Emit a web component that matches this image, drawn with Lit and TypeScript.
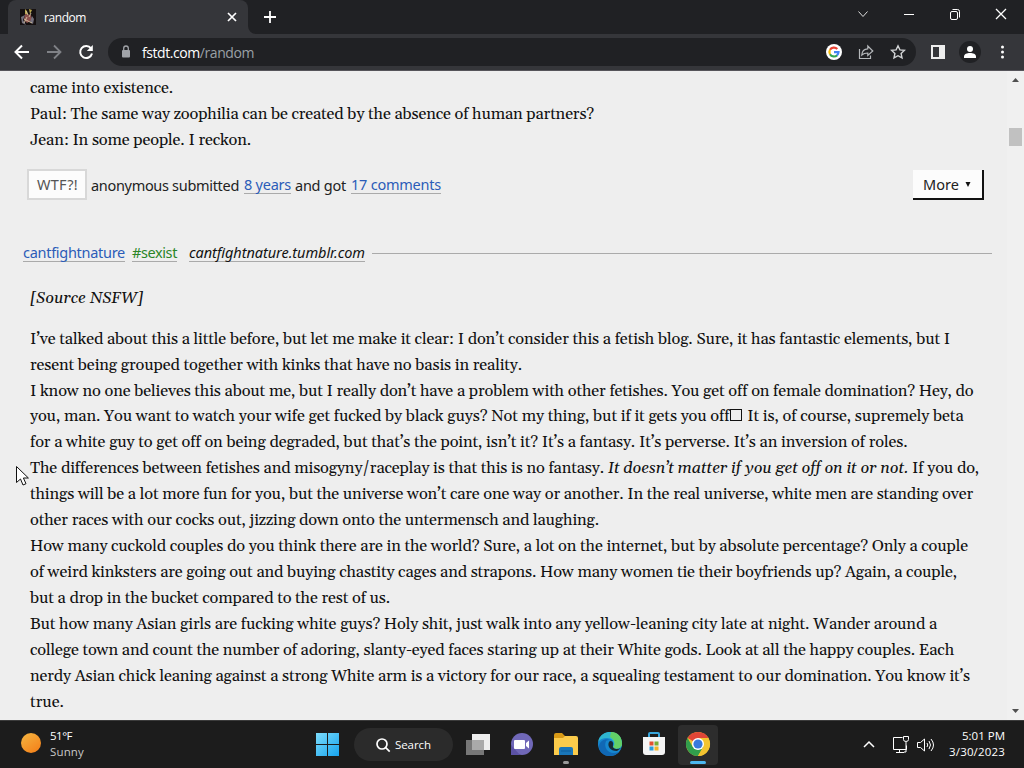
import { LitElement, html, css, svg } from 'lit';
import { customElement, property, query } from 'lit/decorators.js';

interface Line {
  width: number;
  text: unknown;
}

const previousQuote: Line[] = [
  { width: 143, text: 'came into existence.' },
  { width: 564, text: 'Paul: The same way zoophilia can be created by the absence of human partners?' },
  { width: 221, text: 'Jean: In some people. I reckon.' },
];

const quote: Line[] = [
  { width: 920, text: 'I’ve talked about this a little before, but let me make it clear: I don’t consider this a fetish blog. Sure, it has fantastic elements, but I' },
  { width: 492, text: 'resent being grouped together with kinks that have no basis in reality.' },
  { width: 943, text: 'I know no one believes this about me, but I really don’t have a problem with other fetishes. You get off on female domination? Hey, do' },
  { width: 933, text: html`you, man. You want to watch your wife get fucked by black guys? Not my thing, but if it gets you off<i class="tofu"></i> It is, of course, supremely beta` },
  { width: 877, text: 'for a white guy to get off on being degraded, but that’s the point, isn’t it? It’s a fantasy. It’s perverse. It’s an inversion of roles.' },
  { width: 948, text: html`The differences between fetishes and misogyny/raceplay is that this is no fantasy. <em>It doesn’t matter if you get off on it or not.</em> If you do,` },
  { width: 943, text: 'things will be a lot more fun for you, but the universe won’t care one way or another. In the real universe, white men are standing over' },
  { width: 569, text: 'other races with our cocks out, jizzing down onto the untermensch and laughing.' },
  { width: 938, text: 'How many cuckold couples do you think there are in the world? Sure, a lot on the internet, but by absolute percentage? Only a couple' },
  { width: 927, text: 'of weird kinksters are going out and buying chastity cages and strapons. How many women tie their boyfriends up? Again, a couple,' },
  { width: 360, text: 'but a drop in the bucket compared to the rest of us.' },
  { width: 907, text: 'But how many Asian girls are fucking white guys? Holy shit, just walk into any yellow-leaning city late at night. Wander around a' },
  { width: 924, text: 'college town and count the number of adoring, slanty-eyed faces staring up at their White gods. Look at all the happy couples. Each' },
  { width: 940, text: 'nerdy Asian chick leaning against a strong White arm is a victory for our race, a squealing testament to our domination. You know it’s' },
  { width: 34, text: 'true.' },
];

/** A single line of text, tracked so that it runs to the given width. */
@customElement('fit-line')
export class FitLine extends LitElement {
  @property({ type: Number }) width = 0;
  @property({ attribute: false }) text: unknown = '';
  @query('.line') private _line!: HTMLElement;

  static styles = css`
    :host { display: inline-block; vertical-align: top; white-space: nowrap; }
    .line { display: inline-block; font-kerning: normal; }
    .host { color: #fff; }
    .tofu {
      border: 1px solid currentColor;
      box-sizing: border-box;
      display: inline-block;
      height: 12px;
      margin: 0 1px;
      width: 12px;
    }
  `;

  updated() {
    this._line.style.letterSpacing = '0px';
    const natural = this._line.getBoundingClientRect().width;
    const chars = (this._line.textContent ?? '').length;
    if (chars) this._line.style.letterSpacing = `${(this.width - natural) / chars}px`;
  }

  render() {
    return html`<span class="line">${this.text}</span>`;
  }
}

const fit = (width: number, text: unknown) => html`<fit-line .width=${width} .text=${text}></fit-line>`;

@customElement('browser-chrome')
export class BrowserChrome extends LitElement {
  static styles = css`
    :host { display: block; font-family: 'Open Sans', 'Noto Sans', sans-serif; color: #fff; }
    svg { display: block; flex: none; }
    .tabs { background: #202124; display: flex; height: 34px; padding-left: 8px; }
    .tab {
      align-items: center;
      background: #35363a;
      border-radius: 8px 8px 0 0;
      box-sizing: border-box;
      display: flex;
      font-size: 12px;
      height: 34px;
      padding: 0 9px 0 12px;
      width: 240px;
    }
    .tab .title { flex: 1; margin-left: 8px; }
    .curve { align-self: flex-end; }
    .plus { align-self: center; margin-left: 6px; }
    .window { display: flex; margin-left: auto; }
    .window svg { margin-top: -3px; }
    .toolbar {
      align-items: center;
      background: #35363a;
      border-bottom: 1px solid #55545a;
      box-sizing: border-box;
      display: flex;
      height: 37px;
      padding: 0 12px;
    }
    .nav { display: flex; gap: 12px; }
    .omnibox {
      align-items: center;
      background: #202124;
      border-radius: 14px;
      box-sizing: border-box;
      display: flex;
      flex: none;
      font-size: 14px;
      height: 28px;
      margin-left: 12px;
      padding: 0 8px;
      width: 808px;
    }
    .lock { margin-right: 6px; }
    .url { color: #9aa0a6; flex: 1; }
    .actions { display: flex; gap: 12px; }
    .tools { align-items: center; display: flex; gap: 11px; margin-left: 12px; }
  `;

  render() {
    return html`
      <div class="tabs">
        <div class="tab">
          <svg width="16" height="16">
            <rect width="16" height="16" fill="#151010" />
            <path d="M5 0l2 2 1 4-3-1zM9 0l3 1-2 4z" fill="#b8a64c" />
            <path d="M5 5l6 1 1 5-5 3-3-3z" fill="#8d514d" />
            <path d="M1 8l4-2-2 5 3 5-4-2zM12 7l2 3-1 5-3-2z" fill="#75717d" />
            <path d="M6 2l2 4M11 4l-2 4M4 10l8 4M7 8l-3 6" stroke="#d6c3a1" stroke-width=".9" />
          </svg>
          <span class="title">${fit(42, 'random')}</span>
          <svg width="14" height="14"><path d="M3 3l8 8M11 3l-8 8" stroke="#fff" stroke-width="1.7" /></svg>
        </div>
        <svg class="curve" width="8" height="8"><path d="M0 0v8h8a8 8 0 0 1-8-8" fill="#35363a" /></svg>
        <svg class="plus" width="16" height="16"><path d="M8 2v12M2 8h12" stroke="#fff" stroke-width="1.8" /></svg>
        <div class="window">
          <svg width="46" height="34" fill="none" stroke="#ddd"><path d="M18.5 14.5l4.5 5 4.5-5" /></svg>
          <svg width="46" height="34"><path d="M18 17.5h10" stroke="#fff" /></svg>
          <svg width="46" height="34" fill="none" stroke="#fff">
            <rect x="18.5" y="14.5" width="7" height="8" rx="1.5" />
            <path d="M20.5 12.5h5q2 0 2 2v6" />
          </svg>
          <svg width="46" height="34"><path d="M18 12l10 10M28 12l-10 10" stroke="#fff" stroke-width="1.3" /></svg>
        </div>
      </div>
      <div class="toolbar">
        <div class="nav">
          <svg width="20" height="20" fill="none" stroke="#fff" stroke-width="2"><path d="M17 10H4M10 3.5L3.5 10l6.5 6.5" /></svg>
          <svg width="20" height="20" fill="none" stroke="#808287" stroke-width="1.8"><path d="M3 10h13M10 3.5l6.5 6.5-6.5 6.5" /></svg>
          <svg width="20" height="20">
            <path d="M15 6.4A6 6 0 1 0 16 11.5" fill="none" stroke="#fff" stroke-width="2" />
            <path d="M16.8 3v6h-6z" fill="#fff" />
          </svg>
        </div>
        <div class="omnibox">
          <svg class="lock" width="20" height="20">
            <rect x="6" y="8" width="8" height="7.5" rx="1" fill="#a0a3a8" />
            <path d="M7.7 8V6.3a2.3 2.3 0 0 1 4.6 0V8" fill="none" stroke="#a0a3a8" stroke-width="1.3" />
          </svg>
          <span class="url">${fit(112, html`<span class="host">fstdt.com</span>/random`)}</span>
          <div class="actions">
            <svg width="20" height="20" fill="none" stroke-width="2.2">
              <circle cx="10" cy="10" r="8" fill="#fff" />
              <path d="M13.3 7A4.6 4.6 0 0 0 6 7.8" stroke="#ea4335" />
              <path d="M6 7.8a4.6 4.6 0 0 0 0 4.5" stroke="#fbbc05" />
              <path d="M6 12.2a4.6 4.6 0 0 0 7.2 1" stroke="#34a853" />
              <path d="M10 10.2h4.5a4.6 4.6 0 0 1-1.5 3.2" stroke="#4285f4" />
            </svg>
            <svg width="20" height="20" fill="none" stroke="#b5b8bb" stroke-width="1.2">
              <path d="M3.5 7v9.5h11v-3" />
              <path d="M5.8 13c.2-4 2.4-6 6-6.2V4l5 5-5 4.5V11c-2.6 0-4.5.6-6 2z" />
            </svg>
            <svg width="20" height="20" fill="none" stroke="#d2d4d6" stroke-width="1.4">
              <path d="M10 3.8l1.9 4.1 4.5.5-3.3 3.1.9 4.4-4-2.2-4 2.2.9-4.4-3.3-3.1 4.5-.5z" />
            </svg>
          </div>
        </div>
        <div class="tools">
          <svg width="20" height="20"><path d="M3 3h14v14H3zM5 5v10h6V5z" fill="#eee" fill-rule="evenodd" /></svg>
          <svg width="22" height="22">
            <circle cx="11" cy="11" r="11" fill="#202124" />
            <circle cx="11" cy="8" r="3" fill="#fff" />
            <path d="M5 17v-1.5c0-4.6 12-4.6 12 0V17z" fill="#fff" />
          </svg>
          <svg width="20" height="20" fill="#fff">
            <circle cx="10.5" cy="5" r="1.5" /><circle cx="10.5" cy="10" r="1.5" /><circle cx="10.5" cy="15" r="1.5" />
          </svg>
        </div>
      </div>
    `;
  }
}

@customElement('quote-page')
export class QuotePage extends LitElement {
  static styles = css`
    :host { background: #eee; display: flex; height: 649px; overflow: hidden; }
    .page {
      color: #111;
      flex: 1;
      font-family: 'Noto Sans', 'Open Sans', sans-serif;
      font-size: 14.5px;
      padding: 5px 15px 0 23px;
    }
    .quote {
      font-family: Gelasio, Georgia, 'Liberation Serif', serif;
      font-size: 16.4px;
      line-height: 25.93px;
      padding-left: 7px;
    }
    .quote div { height: 25.93px; }
    .meta {
      align-items: center;
      color: #222;
      display: flex;
      height: 30px;
      line-height: 18px;
      margin-top: 16px;
      padding: 0 8px 0 4px;
    }
    .wtf {
      background: #fcfcfc;
      border: 2px solid #d8d8d8;
      box-sizing: border-box;
      color: #555;
      height: 31px;
      line-height: 27px;
      margin-right: 4px;
      padding-left: 8px;
      width: 60px;
    }
    .meta a { margin: 0 4px 0 5px; }
    a { border-bottom: 1px solid #aaa; color: #2b5cb8; display: inline-block; height: 18px; line-height: 19px; }
    .more {
      align-items: center;
      background: #fcfcfc;
      border: solid #111;
      border-width: 0 2px 2px 0;
      box-sizing: border-box;
      display: flex;
      height: 30px;
      justify-content: space-between;
      margin-left: auto;
      padding: 0 10px;
      width: 71px;
    }
    .heading { align-items: center; display: flex; height: 22px; margin-top: 42px; }
    .heading .tag { color: #2a8527; margin: 0 12px 0 7px; }
    .heading .source { color: #111; font-style: italic; }
    .rule { background: #aaa; flex: 1; height: 1px; margin-left: 7px; margin-top: 1px; }
    .note { font-style: italic; margin: 22px 0 15px; }
    .scroll {
      align-items: center;
      background: #f0f0f0;
      display: flex;
      flex-direction: column;
      width: 17px;
    }
    .scroll svg { display: block; }
    .thumb { background: #c1c1c1; height: 18px; margin: 40px 0 auto; width: 13px; }
  `;

  render() {
    return html`
      <div class="page">
        <div class="quote">${previousQuote.map(l => html`<div>${fit(l.width, l.text)}</div>`)}</div>
        <div class="meta">
          <span class="wtf">${fit(41, 'WTF?!')}</span>
          ${fit(148, 'anonymous submitted')}
          <a>${fit(47, '8 years')}</a>
          ${fit(51, 'and got')}
          <a>${fit(90, '17 comments')}</a>
          <span class="more">${fit(36, 'More')}
            <svg width="8" height="8"><path d="M1.5 2h5L4 7z" fill="#111" /></svg>
          </span>
        </div>
        <div class="heading">
          <a>${fit(102, 'cantfightnature')}</a>
          <a class="tag">${fit(45, '#sexist')}</a>
          <a class="source">${fit(176, 'cantfightnature.tumblr.com')}</a>
          <span class="rule"></span>
        </div>
        <div class="quote">
          <div class="note">${fit(113, '[Source NSFW]')}</div>
          ${quote.map(l => html`<div>${fit(l.width, l.text)}</div>`)}
        </div>
      </div>
      <div class="scroll">
        <svg width="17" height="17"><path d="M5 11l3.5-4 3.5 4z" fill="#505050" /></svg>
        <div class="thumb"></div>
        <svg width="17" height="17"><path d="M5 6l3.5 4L12 6z" fill="#505050" /></svg>
      </div>
    `;
  }
}

const appIcons = [
  svg`<circle cx="15" cy="15" r="11" fill="#7068b8" /><path d="M4 16v10h9z" fill="#5b52a5" />
    <rect x="7" y="11" width="11" height="9" rx="1" fill="#fff" /><path d="M19 14l3-2.5v8L19 17z" fill="#fff" />`,
  svg`<path d="M3 6q0-2 2-2h6l3 3h10v8H3z" fill="#d99a16" /><path d="M3 9h9l2-2h11q2 0 2 2v17H3z" fill="#fbcb4b" />
    <path d="M8 26v-6q0-2 2-2h10q2 0 2 2v6z" fill="#1976b9" /><path d="M10 22h10" stroke="#0f5d99" />`,
  svg`<circle cx="15" cy="15" r="12" fill="#1687cf" />
    <path d="M3.5 11C8-1 27 1 27 15c0 5-7 6-9 3 3-4-1-9-6-9-4 0-7 1-8.5 4z" fill="#2fb6cf" />
    <path d="M16 3c8 0 11 6 11 12 0 5-7 6-9 3 3-3 1-8-3-10z" fill="#62d067" />
    <path d="M11 12c-3 7 3 15 13 11-6 7-20 5-20-6 1-6 7-8 11-6-2 0-3 0-4 1z" fill="#1068b5" />
    <path d="M14 13c-2 4 1 9 8 9l4-3c-4 2-9 1-8-3 1-4-3-5-4-3z" fill="#172b36" />`,
  svg`<path d="M10 9V5q0-1 1-1h8q1 0 1 1v4" fill="none" stroke="#38a6dc" stroke-width="2" />
    <path d="M4 8h22v15q0 3-3 3H7q-3 0-3-3z" fill="#f4f4f4" />
    <path d="M10.5 12.5h4v4h-4z" fill="#e35131" /><path d="M15.5 12.5h4v4h-4z" fill="#7aad35" />
    <path d="M10.5 17.5h4v4h-4z" fill="#2c9cdb" /><path d="M15.5 17.5h4v4h-4z" fill="#f3b529" />`,
  svg`<circle cx="15" cy="15" r="12" fill="#f4c430" />
    <path d="M15 15L4.6 9a12 12 0 0 1 20.8 0z" fill="#df4537" />
    <path d="M15 15l5.2 3L15 27A12 12 0 0 1 4.6 9l5.2 9z" fill="#319e4c" />
    <path d="M15 9h10.4A12 12 0 0 1 15 27l5.2-9z" fill="#f4c430" />
    <circle cx="15" cy="15" r="6" fill="#fff" /><circle cx="15" cy="15" r="4.6" fill="#3979dc" />`,
];

@customElement('task-bar')
export class TaskBar extends LitElement {
  static styles = css`
    :host {
      align-items: center;
      background: #1c1c1c;
      border-top: 1px solid #3b3b3b;
      box-sizing: border-box;
      color: #fff;
      display: flex;
      font-family: 'Open Sans', 'Noto Sans', sans-serif;
      font-size: 11.5px;
      height: 48px;
      line-height: 16px;
    }
    svg { display: block; flex: none; }
    .weather { align-items: center; display: flex; gap: 9px; margin-top: -2px; padding-left: 21px; width: 292px; }
    .sun {
      background: linear-gradient(145deg, #f4b642, #f47c16);
      border-radius: 50%;
      height: 20px;
      margin-top: -1px;
      width: 20px;
    }
    .muted { color: #c8c8c8; }
    .search {
      align-items: center;
      background: #2b2b2b;
      border-radius: 17px;
      box-sizing: border-box;
      display: flex;
      gap: 4px;
      height: 33px;
      margin: 0 12px 0 13px;
      padding-left: 21px;
      width: 99px;
    }
    .apps { display: flex; gap: 4px; margin-left: 11px; }
    .app {
      align-items: center;
      border-radius: 4px;
      box-sizing: border-box;
      display: flex;
      flex-direction: column;
      height: 40px;
      padding-top: 4px;
      width: 40px;
    }
    .app.active { background: #2d2d2d; }
    .mark { background: #999; border-radius: 2px; height: 3px; margin-top: 2px; width: 6px; }
    .active .mark { background: #4cb7ef; width: 16px; }
    .tray { align-items: center; display: flex; gap: 4px; margin-left: auto; margin-right: 19px; }
    .chevron { margin-right: 8px; }
    .clock { margin-top: -2px; text-align: right; width: 66px; }
  `;

  render() {
    return html`
      <div class="weather">
        <span class="sun"></span>
        <div><div>${fit(22, '51°F')}</div><div class="muted">${fit(34, 'Sunny')}</div></div>
      </div>
      <svg width="28" height="28">
        <linearGradient id="win" x2="1" y2="1"><stop stop-color="#7cdcfb" /><stop offset="1" stop-color="#16a3ee" /></linearGradient>
        <path fill="url(#win)" d="M3 2h11v11H3zM15 2h11v11H15zM3 14h11v11H3zM15 14h11v11H15z" />
      </svg>
      <div class="search">
        <svg width="16" height="16" fill="none" stroke="#fff" stroke-width="1.7"><circle cx="7" cy="7" r="5" /><path d="M10.7 10.7l4 4" /></svg>
        ${fit(36, 'Search')}
      </div>
      <svg width="26" height="30"><path d="M7 4h18v16H7z" fill="#eee" /><path d="M1 10h18v15H1z" fill="#777" /><path d="M7 10h12v10H7z" fill="#aaa" /></svg>
      <div class="apps">
        ${appIcons.map((icon, i) => html`
          <div class="app ${i === 4 ? 'active' : ''}">
            <svg width="30" height="30">${icon}</svg>
            ${i === 1 || i === 4 ? html`<span class="mark"></span>` : ''}
          </div>`)}
      </div>
      <div class="tray">
        <svg class="chevron" width="20" height="20" fill="none" stroke="#fff" stroke-width="1.5"><path d="M5 12l5-5 5 5" /></svg>
        <svg width="20" height="20" fill="none" stroke="#fff">
          <path d="M11.5 2.5h-9v12h13v-4M8.5 15v3M5 17.5h8M12.5 1.5h5v3q0 2-2.5 2t-2.5-2zM15 7v10h-2" />
        </svg>
        <svg width="20" height="20" fill="none" stroke="#fff">
          <path d="M2.5 7.5h3l4-3.5v12l-4-3.5h-3zM12 8q1.5 2 0 4M14 6q3 4 0 8M16 4q5 6 0 12" />
        </svg>
        <div class="clock"><div>${fit(43, '5:01 PM')}</div><div>${fit(56, '3/30/2023')}</div></div>
      </div>
    `;
  }
}

@customElement('app-root')
export class AppRoot extends LitElement {
  static styles = css`
    :host { display: block; height: 768px; overflow: hidden; position: relative; width: 1024px; }
    .cursor { left: 15px; position: absolute; top: 465px; }
  `;

  render() {
    return html`
      <browser-chrome></browser-chrome>
      <quote-page></quote-page>
      <task-bar></task-bar>
      <svg class="cursor" width="14" height="22">
        <path d="M1.5 1.5v16l4-3.5 2.5 6 3-1.3-2.6-5.7h5z" fill="#fff" stroke="#111" />
      </svg>
    `;
  }
}
